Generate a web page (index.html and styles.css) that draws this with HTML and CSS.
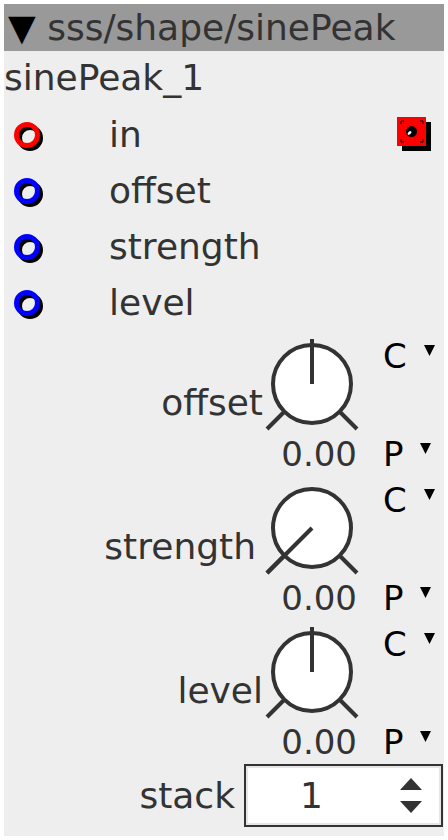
FILE: index.html
```html
<!DOCTYPE html>
<html lang="en">
<head>
    <meta charset="UTF-8">
    <meta name="viewport" content="width=device-width, initial-scale=1.0">
    <title>sinePeak</title>
    <link rel="stylesheet" href="styles.css">
</head>
<body>
    <div class="node">
        <div class="title"><span class="caret">▼</span> sss/shape/sinePeak</div>
        <div class="name">sinePeak_1</div>

        <div class="port">
            <svg class="jack" width="40" height="40" viewBox="0 0 40 40">
                <circle cx="19" cy="23" r="10.5" fill="none" stroke="#000" stroke-width="5"/>
                <circle cx="16" cy="20" r="10.5" fill="none" stroke="#ff0000" stroke-width="5"/>
            </svg>
            <span class="port-name">in</span>
            <svg class="outlet" width="40" height="40" viewBox="0 0 40 40">
                <rect x="8" y="7" width="29" height="29" fill="#000"/>
                <rect x="3" y="2" width="29" height="29" fill="#ff0000"/>
                <path d="M7 9V6h3M26 6h3v3M29 24v3h-3M10 27H7v-3" fill="none" stroke="#000" stroke-width="1"/>
                <circle cx="17.5" cy="16.5" r="5.5" fill="#000"/>
                <ellipse cx="15.5" cy="18" rx="2.2" ry="1.4" fill="#fff" transform="rotate(-40 15.5 18)"/>
            </svg>
        </div>
        <div class="port">
            <svg class="jack" width="40" height="40" viewBox="0 0 40 40">
                <circle cx="19" cy="23" r="10.5" fill="none" stroke="#000" stroke-width="5"/>
                <circle cx="16" cy="20" r="10.5" fill="none" stroke="#0000ff" stroke-width="5"/>
            </svg>
            <span class="port-name">offset</span>
        </div>
        <div class="port">
            <svg class="jack" width="40" height="40" viewBox="0 0 40 40">
                <circle cx="19" cy="23" r="10.5" fill="none" stroke="#000" stroke-width="5"/>
                <circle cx="16" cy="20" r="10.5" fill="none" stroke="#0000ff" stroke-width="5"/>
            </svg>
            <span class="port-name">strength</span>
        </div>
        <div class="port">
            <svg class="jack" width="40" height="40" viewBox="0 0 40 40">
                <circle cx="19" cy="23" r="10.5" fill="none" stroke="#000" stroke-width="5"/>
                <circle cx="16" cy="20" r="10.5" fill="none" stroke="#0000ff" stroke-width="5"/>
            </svg>
            <span class="port-name">level</span>
        </div>

        <div class="knobs">
            <div class="knob-row">
                <div class="knob-label">offset</div>
                <svg class="knob" width="96" height="96" viewBox="0 0 96 96">
                    <line x1="3" y1="93" x2="21" y2="75"/>
                    <line x1="93" y1="93" x2="75" y2="75"/>
                    <circle cx="48" cy="48" r="39"/>
                    <line x1="48" y1="48" x2="48" y2="3"/>
                </svg>
                <div class="mode">C <svg class="drop" width="11" height="11" viewBox="0 0 11 11"><polygon points="0,0 11,0 5.5,11"/></svg></div>
                <div class="knob-value">0.00</div>
                <div class="mode">P <svg class="drop" width="11" height="11" viewBox="0 0 11 11"><polygon points="0,0 11,0 5.5,11"/></svg></div>
            </div>
            <div class="knob-row">
                <div class="knob-label knob-label-wide">strength</div>
                <svg class="knob" width="96" height="96" viewBox="0 0 96 96">
                    <line x1="3" y1="93" x2="21" y2="75"/>
                    <line x1="93" y1="93" x2="75" y2="75"/>
                    <circle cx="48" cy="48" r="39"/>
                    <line x1="48" y1="48" x2="3" y2="93"/>
                </svg>
                <div class="mode">C <svg class="drop" width="11" height="11" viewBox="0 0 11 11"><polygon points="0,0 11,0 5.5,11"/></svg></div>
                <div class="knob-value">0.00</div>
                <div class="mode">P <svg class="drop" width="11" height="11" viewBox="0 0 11 11"><polygon points="0,0 11,0 5.5,11"/></svg></div>
            </div>
            <div class="knob-row">
                <div class="knob-label">level</div>
                <svg class="knob" width="96" height="96" viewBox="0 0 96 96">
                    <line x1="3" y1="93" x2="21" y2="75"/>
                    <line x1="93" y1="93" x2="75" y2="75"/>
                    <circle cx="48" cy="48" r="39"/>
                    <line x1="48" y1="48" x2="48" y2="3"/>
                </svg>
                <div class="mode">C <svg class="drop" width="11" height="11" viewBox="0 0 11 11"><polygon points="0,0 11,0 5.5,11"/></svg></div>
                <div class="knob-value">0.00</div>
                <div class="mode">P <svg class="drop" width="11" height="11" viewBox="0 0 11 11"><polygon points="0,0 11,0 5.5,11"/></svg></div>
            </div>
        </div>

        <div class="stack">
            <label for="stackCount">stack</label>
            <div class="spin">
                <span class="spin-value" id="stackCount">1</span>
                <svg class="spin-arrows" width="24" height="36" viewBox="0 0 24 36">
                    <polygon points="12,0 23,12 1,12"/>
                    <polygon points="1,23 23,23 12,35"/>
                </svg>
            </div>
        </div>
    </div>
</body>
</html>
```

FILE: styles.css
```css
body {
    margin: 0;
    background-color: #fff;
    font-family: "DejaVu Sans", sans-serif;
    color: #333;
}
.node {
    margin: 4px;
    width: 440px;
    height: 832px;
    background-color: #eee;
    font-size: 36px;
}
.title {
    height: 47px;
    line-height: 47px;
    padding-left: 4px;
    background-color: #999;
    white-space: nowrap;
}
.caret {
    color: #000;
}
.name {
    height: 56px;
    line-height: 54px;
}
.port {
    display: flex;
    align-items: center;
    height: 56px;
    line-height: 56px;
}
.jack {
    margin-left: 7px;
    flex: none;
}
.port-name {
    margin-left: 58px;
}
.outlet {
    margin-left: auto;
    margin-right: 10px;
    flex: none;
}
.knobs {
    display: flex;
    flex-direction: column;
    gap: 8px;
    margin-top: 5px;
}
.knob-row {
    display: grid;
    grid-template-columns: 1fr 96px 84px;
    grid-template-rows: 96px 40px;
}
.knob-label {
    grid-row: 1;
    align-self: end;
    margin-bottom: 9px;
    margin-right: 1px;
    line-height: 40px;
    text-align: right;
    white-space: nowrap;
}
.knob-label-wide {
    margin-right: 8px;
}
.knob {
    grid-row: 1;
    grid-column: 2;
    display: block;
}
.knob line,
.knob circle {
    stroke: #333;
    stroke-width: 4;
}
.knob circle {
    fill: #fff;
}
.knob-value {
    grid-row: 2;
    grid-column: 2;
    margin-top: 4px;
    padding-right: 3px;
    line-height: 36px;
    font-size: 34px;
    text-align: right;
    white-space: nowrap;
}
.mode {
    grid-column: 3;
    padding-left: 23px;
    color: #000;
    font-size: 34px;
    white-space: nowrap;
}
.mode:nth-of-type(1) {
    grid-row: 1;
    line-height: 48px;
}
.knob-row .mode:last-child {
    grid-row: 2;
    margin-top: 4px;
    line-height: 36px;
}
.drop {
    vertical-align: 12px;
    margin-left: 6px;
}
.stack {
    display: flex;
    justify-content: flex-end;
    align-items: center;
    gap: 9px;
    margin-top: 4px;
    margin-right: 1px;
}
.stack label {
    line-height: 40px;
}
.spin {
    display: flex;
    align-items: center;
    width: 195px;
    height: 59px;
    border: 2px solid #333;
    box-shadow: inset 0 0 0 2px #e6e6e6;
    background-color: #fff;
}
.spin-value {
    flex: 1;
    text-align: center;
}
.spin-arrows {
    margin-left: 22px;
    margin-right: 18px;
    fill: #333;
}
```
